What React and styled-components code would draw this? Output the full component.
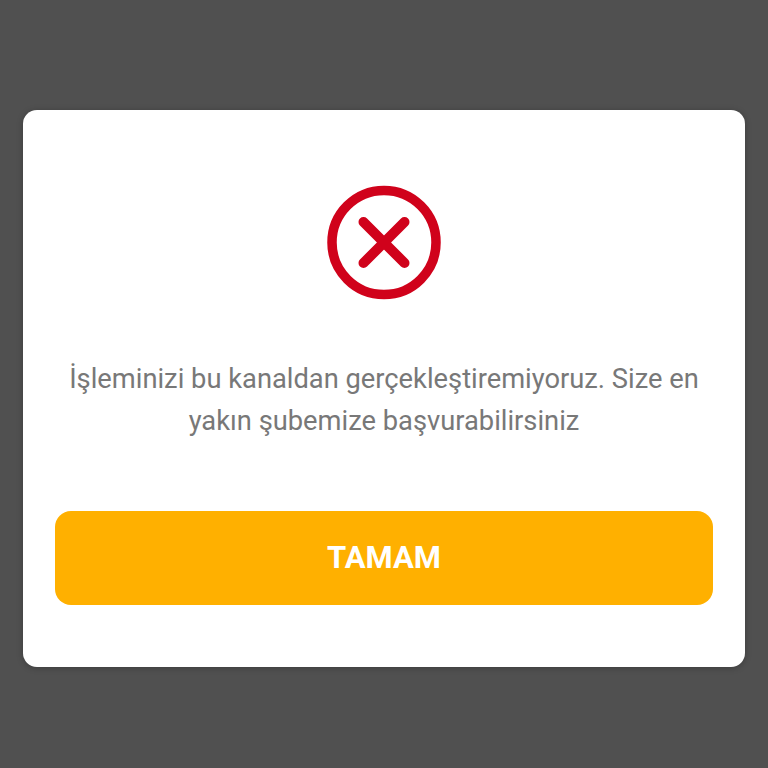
import styled, { createGlobalStyle } from "styled-components";

const GlobalStyle = createGlobalStyle`
  html, body {
    margin: 0;
    padding: 0;
  }
  body {
    background-color: #505050;
    font-family: Roboto, "Noto Sans", sans-serif;
  }
`;

const Overlay = styled.div`
  box-sizing: border-box;
  width: 768px;
  height: 768px;
  padding: 110px 23px 0;
  background-color: #505050;
`;

const Dialog = styled.div`
  box-sizing: border-box;
  width: 722px;
  height: 557px;
  padding: 75px 32px 0;
  background-color: #fff;
  border-radius: 14px;
  box-shadow: 0 1px 6px rgba(0, 0, 0, 0.25);
  display: flex;
  flex-direction: column;
  align-items: center;
`;

const IconWrapper = styled.div`
  width: 116px;
  height: 116px;
  margin-bottom: 58px;
`;

const Message = styled.p`
  margin: 0 0 69px;
  width: 100%;
  font-size: 27.3px;
  line-height: 41.5px;
  font-weight: 400;
  color: #787878;
  text-align: center;
`;

const Button = styled.button`
  width: 100%;
  height: 94px;
  padding: 0 0 2px;
  border: none;
  border-radius: 16px;
  background-color: #ffb000;
  color: #fff;
  font-family: inherit;
  font-size: 31px;
  font-weight: 700;
`;

const ErrorIcon = () => (
  <svg width="116" height="116" viewBox="0 0 116 116" fill="none">
    <circle cx="58" cy="57.5" r="52" stroke="#d0021b" strokeWidth="9.5" />
    <path
      d="M37.5 37L78.5 78M78.5 37L37.5 78"
      stroke="#d0021b"
      strokeWidth="10"
      strokeLinecap="round"
    />
  </svg>
);

export default function App() {
  return (
    <>
      <GlobalStyle />
      <Overlay>
        <Dialog>
          <IconWrapper>
            <ErrorIcon />
          </IconWrapper>
          <Message>
            İşleminizi bu kanaldan gerçekleştiremiyoruz. Size en yakın şubemize
            başvurabilirsiniz
          </Message>
          <Button>TAMAM</Button>
        </Dialog>
      </Overlay>
    </>
  );
}
